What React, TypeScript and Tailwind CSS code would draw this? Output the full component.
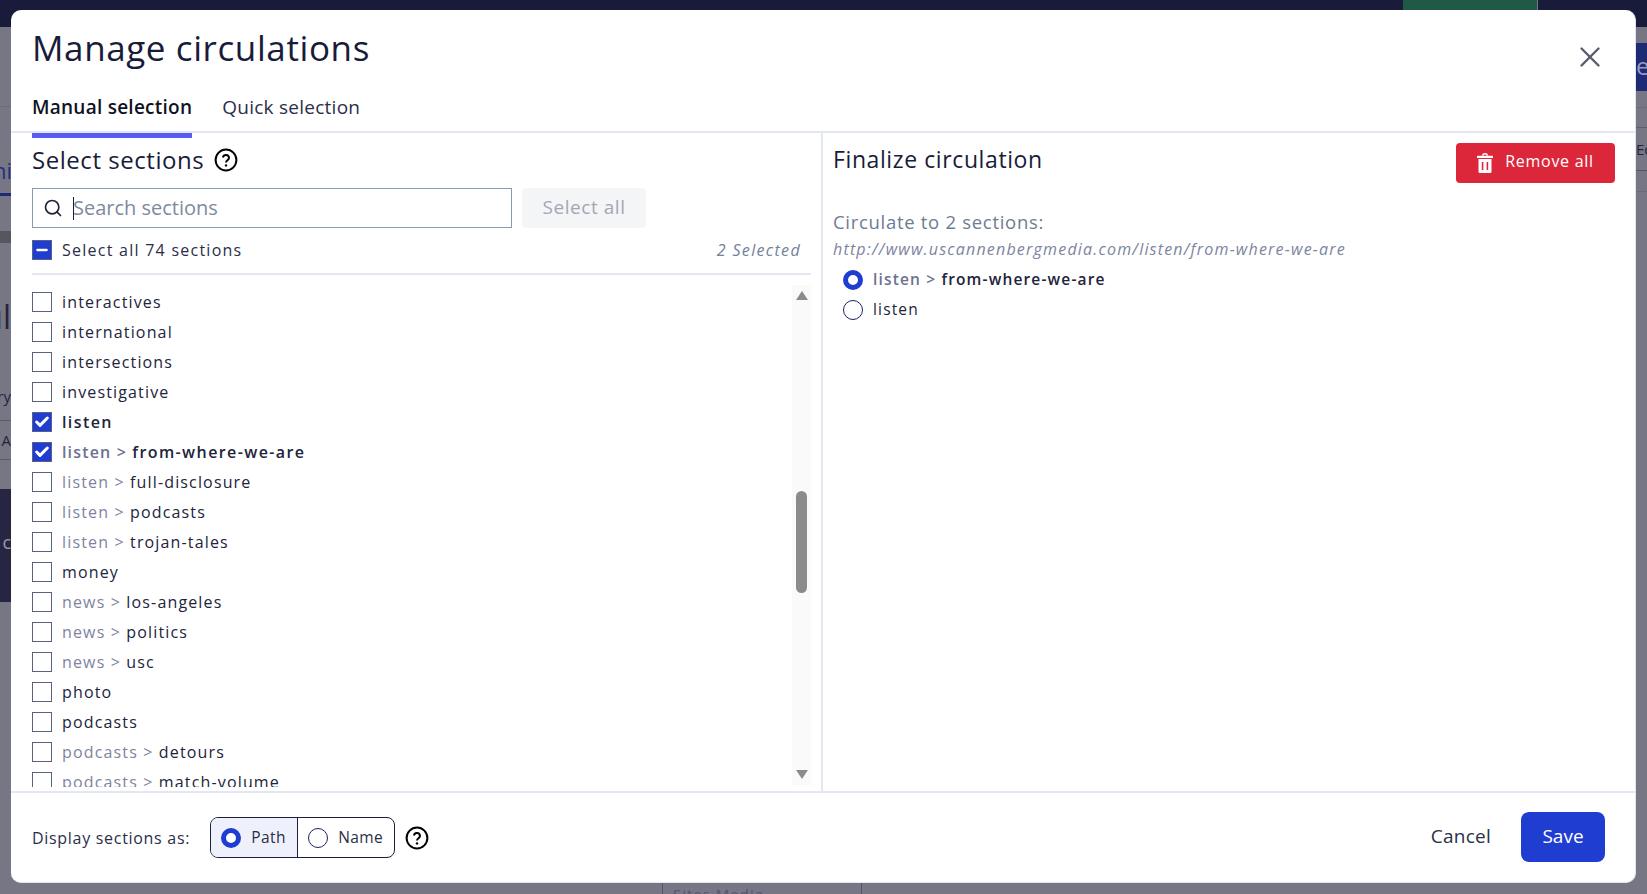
import { Search, X, Check, Minus } from 'lucide-react';

type Row = { parent?: string; name: string; checked?: boolean };

const ROWS: Row[] = [
    { name: 'interactives' },
    { name: 'international' },
    { name: 'intersections' },
    { name: 'investigative' },
    { name: 'listen', checked: true },
    { parent: 'listen', name: 'from-where-we-are', checked: true },
    { parent: 'listen', name: 'full-disclosure' },
    { parent: 'listen', name: 'podcasts' },
    { parent: 'listen', name: 'trojan-tales' },
    { name: 'money' },
    { parent: 'news', name: 'los-angeles' },
    { parent: 'news', name: 'politics' },
    { parent: 'news', name: 'usc' },
    { name: 'photo' },
    { name: 'podcasts' },
    { parent: 'podcasts', name: 'detours' },
    { parent: 'podcasts', name: 'match-volume' },
];

function HelpIcon() {
    return (
        <svg width="24" height="24" viewBox="0 0 24 24" fill="none" className="shrink-0">
            <circle cx="12" cy="12" r="10.4" stroke="#000" strokeWidth="2" />
            <path d="M8.9 9.4a3.1 3.1 0 0 1 6.1.6c0 2-3 2.4-3 4.4" stroke="#000" strokeWidth="2" />
            <circle cx="12" cy="17.4" r="1.2" fill="#000" />
        </svg>
    );
}

function TrashIcon() {
    return (
        <svg width="16" height="20" viewBox="0 0 16 20" fill="none" className="shrink-0">
            <path d="M5.5 2.6C5.7 1.4 6.6.8 8 .8s2.300.6 2.500 1.800" stroke="#fff" strokeWidth="1.400" />
            <rect x="0" y="2.800" width="16" height="2.200" rx="0.600" fill="#fff" />
            <path fillRule="evenodd" clipRule="evenodd" d="M1.500 6h13v12.800a1.200 1.200 0 0 1-1.200 1.200H2.700a1.200 1.200 0 0 1-1.200-1.200V6zM4.800 9v8h1.600V9H4.800zm4.800 0v8h1.600V9H9.600z" fill="#fff" />
        </svg>
    );
}

function Radio({ on }: { on?: boolean }) {
    if (on) {
        return <span className="w-5 h-5 rounded-full border-[5px] border-[#1f3dd1] bg-white shrink-0" />;
    }
    return <span className="w-5 h-5 rounded-full border border-[#1c2260] bg-white shrink-0" />;
}

function Checkbox({ checked }: { checked?: boolean }) {
    if (checked) {
        return (
            <span className="w-5 h-5 flex items-center justify-center bg-[#1f3dd1] border border-[#5a5f85] shrink-0">
                <Check size={16} strokeWidth={4.500} color="#fff" />
            </span>
        );
    }
    return <span className="w-5 h-5 bg-white border border-[#5d6180] shrink-0" />;
}

function SectionRow({ row }: { row: Row }) {
    const bold = row.checked ? 'font-semibold' : '';
    const nameTracking = row.checked ? 'tracking-[1.4px]' : '';
    return (
        <div className="h-[30px] shrink-0 flex items-center gap-[10px] text-[16px] tracking-[1.15px] text-[#22243c]">
            <Checkbox checked={row.checked} />
            <span className={`whitespace-nowrap ${bold}`}>
                {row.parent && <span className={row.checked ? 'text-[#6d7190]' : 'text-[#80849f]'}>{row.parent} &gt; </span>}
                <span className={nameTracking}>{row.name}</span>
            </span>
        </div>
    );
}

function Scrollbar() {
    return (
        <div className="w-[19px] h-[500px] bg-[#fafafa] flex flex-col items-center pt-[6px]">
            <span className="w-0 h-0 border-x-[6px] border-x-transparent border-b-[9px] border-b-[#8b8b8b]" />
            <span className="w-[11px] h-[102px] rounded-full bg-[#8b8b8b] mt-[191px]" />
            <span className="w-0 h-0 border-x-[6px] border-x-transparent border-t-[9px] border-t-[#8b8b8b] mt-[177px]" />
        </div>
    );
}

function Backdrop() {
    return (
        <div className="h-[894px] flex flex-col bg-[#767685]">
            <div className="h-[27px] bg-[#181c3a] flex justify-end pr-[109px] shrink-0">
                <div className="w-[135px] bg-[#205a46] border-r border-[#767685]" />
            </div>
            <div className="flex-1 flex justify-between overflow-hidden">
                <div className="w-[11px] overflow-hidden flex flex-col text-[#22243c] whitespace-nowrap">
                    <div className="h-[80px] border-b border-[#6c6c7b] shrink-0" />
                    <div className="h-[89px] shrink-0 border-b-[3px] border-[#1f2a75] flex items-end justify-end text-[#27307a] text-[22px] leading-[46px]">
                        <span className="-mr-[1px]">ni</span>
                    </div>
                    <div className="h-[47px] shrink-0 border-b-[12px] border-[#56565f]" />
                    <div className="h-[110px] shrink-0 text-[32px] leading-[72px] flex justify-end items-end">
                        <span>ul</span>
                    </div>
                    <div className="h-[68px] shrink-0 border-b border-[#5a5a68] flex justify-end items-end text-[15px] leading-[48px]">
                        <span>ry</span>
                    </div>
                    <div className="h-[39px] shrink-0 border-b border-[#5a5a68] flex justify-end text-[15px] leading-[38px]">
                        <span>A</span>
                    </div>
                    <div className="h-[29px] shrink-0" />
                    <div className="h-[113px] shrink-0 bg-[#262642] text-[#9b9bab] text-[18px] leading-[106px] flex justify-end">
                        <span>c</span>
                    </div>
                </div>
                <div className="flex-1 flex items-end pl-[651px]">
                    <div className="w-[200px] h-[11px] border-x border-[#54546a] overflow-hidden pl-[10px] text-[15px] leading-[22px] tracking-[1px] text-[#54546a] whitespace-nowrap">
                        Sites Media
                    </div>
                </div>
                <div className="w-[11px] overflow-hidden flex flex-col text-[#22243c] whitespace-nowrap">
                    <div className="h-[16px] shrink-0" />
                    <div className="h-[48px] shrink-0 bg-[#1f2a75] text-[#9b9bc0] text-[24px] leading-[46px]">e</div>
                    <div className="h-[17px] shrink-0 border-b border-[#6a6a79]" />
                    <div className="h-[20px] shrink-0 border-b border-[#5d5d6c]" />
                    <div className="h-[43px] shrink-0 border-b border-[#54546a] text-[15px] leading-[42px]">Ed</div>
                    <div className="h-[21px] shrink-0 border-b border-[#6a6a79]" />
                </div>
            </div>
        </div>
    );
}

export default function App() {
    return (
        <div className="relative h-[894px] overflow-hidden font-['Open_Sans',sans-serif]">
            <Backdrop />

            {/* modal */}
            <div className="absolute left-[11px] top-[10px] w-[1625px] h-[873px] bg-white rounded-[10px] flex flex-col border-r border-b border-[#e2e5ee]">
                <div className="h-[123px] shrink-0 border-b-2 border-[#e3e7f1] pl-[21px] pr-[28px]">
                    <div className="flex justify-between items-start">
                        <h2 className="text-[35px] leading-[48px] pt-[14px] h-[62px] tracking-[0.6px] text-[#181c3a]">Manage circulations</h2>
                        <X size={34} strokeWidth={1.700} color="#5a5d70" className="mt-[30px]" />
                    </div>
                    <div className="flex gap-[30px] mt-[18px] text-[19px] leading-[30px] tracking-[0.25px]">
                        <div className="relative h-[31px] text-[#101223] font-semibold">
                            Manual selection
                            <span className="absolute left-0 right-0 top-[41px] h-[5px] bg-[#5c5cf0]" />
                        </div>
                        <div className="text-[#2b2e48]">Quick selection</div>
                    </div>
                </div>

                <div className="flex-1 flex min-h-0">
                    <div className="w-[812px] shrink-0 border-r-2 border-[#e3e7f1] pl-[21px] pr-[10px] flex flex-col">
                        <div className="h-[55px] shrink-0 flex items-start gap-[10px] pt-[12px]">
                            <h3 className="text-[24px] leading-[30px] tracking-[0.55px] text-[#181c3a]">Select sections</h3>
                            <span className="mt-[3px]">
                                <HelpIcon />
                            </span>
                        </div>
                        <div className="flex gap-[10px] h-[40px] shrink-0">
                            <div className="w-[480px] border border-[#8a9bb8] flex items-center pl-[10px]">
                                <Search size={20} strokeWidth={2} color="#22243c" />
                                <span className="ml-[10px] w-px h-[23px] bg-[#181c3a]" />
                                <span className="text-[20px] text-[#7d8aa0] -ml-px pb-[1px]">Search sections</span>
                            </div>
                            <div className="w-[124px] rounded-[4px] bg-[#f4f5f7] text-[#a3a7b2] text-[19px] tracking-[0.55px] flex items-center justify-center pb-[1px]">
                                Select all
                            </div>
                        </div>
                        <div className="h-[47px] shrink-0 border-b-2 border-[#e3e7f1] flex items-start pt-[12px] justify-between pr-[10px] text-[16px] leading-[20px]">
                            <div className="flex items-center gap-[10px] tracking-[1.25px] text-[#2b2e48]">
                                <span className="w-5 h-5 flex items-center justify-center bg-[#1f3dd1] border border-[#5a5f85]">
                                    <Minus size={16} strokeWidth={3.500} color="#fff" />
                                </span>
                                Select all 74 sections
                            </div>
                            <span className="italic text-[#73829b] tracking-[1.35px]">2 Selected</span>
                        </div>
                        <div className="flex-1 min-h-0 flex justify-between pt-[10px] overflow-hidden">
                            <div className="flex flex-col h-[502px] overflow-hidden pt-[2px]">
                                {ROWS.map((row) => (
                                    <SectionRow key={(row.parent ?? '') + row.name} row={row} />
                                ))}
                            </div>
                            <Scrollbar />
                        </div>
                    </div>

                    <div className="flex-1 pl-[10px] pr-[20px]">
                        <div className="flex justify-between items-start pt-[10px] h-[72px]">
                            <h3 className="text-[23px] leading-[33px] tracking-[0.6px] text-[#181c3a]">Finalize circulation</h3>
                            <button className="w-[159px] h-[40px] rounded-[4px] bg-[#dc273b] text-white text-[16px] tracking-[0.7px] flex items-center justify-center gap-[12px]">
                                <TrashIcon />
                                <span className="pb-[5px]">Remove all</span>
                            </button>
                        </div>
                        <div className="text-[18.5px] leading-[34px] h-[32px] tracking-[0.7px] text-[#6e7c93]">Circulate to 2 sections:</div>
                        <div className="text-[16px] leading-[24px] italic tracking-[1.2px] text-[#7c84a0] whitespace-nowrap">
                            http://www.uscannenbergmedia.com/listen/from-where-we-are
                        </div>
                        <div className="mt-[4px] pl-[10px] flex flex-col text-[15.5px] tracking-[1.15px] text-[#22243c]">
                            <div className="h-[30px] flex items-center gap-[10px] font-semibold">
                                <Radio on />
                                <span>
                                    <span className="text-[#6d7190]">listen &gt; </span>
                                    from-where-we-are
                                </span>
                            </div>
                            <div className="h-[30px] flex items-center gap-[10px]">
                                <Radio />
                                <span>listen</span>
                            </div>
                        </div>
                    </div>
                </div>

                <div className="h-[91px] shrink-0 border-t-2 border-[#e3e7f1] pl-[21px] pr-[30px] flex items-center justify-between">
                    <div className="flex items-center">
                        <span className="text-[16px] tracking-[0.7px] text-[#2b2e48]">Display sections as:</span>
                        <div className="ml-[20px] h-[41px] w-[185px] rounded-[8px] border border-[#1c1f3b] flex overflow-hidden text-[15.5px] tracking-[0.45px] text-[#2b2e48]">
                            <div className="w-[87px] bg-[#eef1fb] border-r border-[#1c1f3b] flex items-center pl-[10px] gap-[10px]">
                                <Radio on />
                                Path
                            </div>
                            <div className="flex-1 flex items-center pl-[10px] gap-[10px]">
                                <Radio />
                                Name
                            </div>
                        </div>
                        <span className="ml-[10px]">
                            <HelpIcon />
                        </span>
                    </div>
                    <div className="flex items-center gap-[30px]">
                        <span className="text-[19px] tracking-[0.25px] text-[#2b2e48] pb-[2px]">Cancel</span>
                        <button className="w-[84px] h-[50px] mb-[2px] rounded-[8px] bg-[#1f3dd1] text-white text-[19px]">Save</button>
                    </div>
                </div>
            </div>
        </div>
    );
}
